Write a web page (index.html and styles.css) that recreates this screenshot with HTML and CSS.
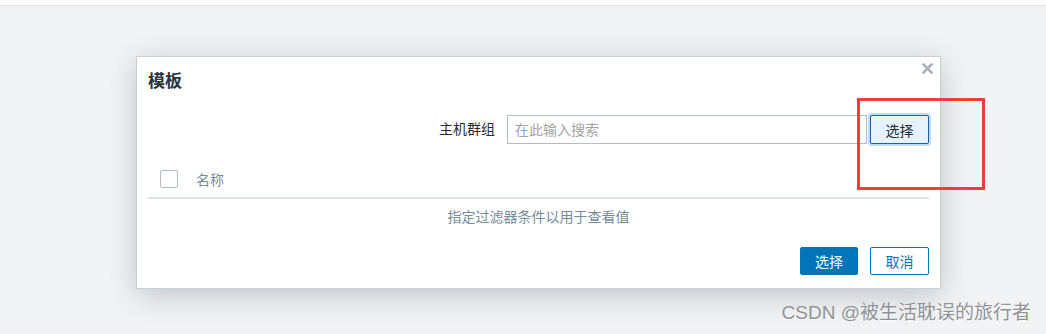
FILE: index.html
```html
<!DOCTYPE html>
<html lang="zh-CN">
<head>
    <meta charset="UTF-8">
    <meta name="viewport" content="width=device-width, initial-scale=1.0">
    <title>模板</title>
    <link rel="stylesheet" href="styles.css">
</head>
<body>

    <div class="topbar"></div>

    <div class="stage">

        <div class="overlay-dialog">
            <div class="dialog-header">
                <h4>模板</h4>
                <button class="btn-close" title="关闭">
                    <svg width="11" height="11" viewBox="0 0 11 11">
                        <path d="M1.5 1.5 L9.5 9.5 M9.5 1.5 L1.5 9.5" stroke="currentColor" stroke-width="2.6" stroke-linecap="square"/>
                    </svg>
                </button>
            </div>

            <div class="dialog-body">
                <div class="filter-row">
                    <label class="filter-label">主机群组</label>
                    <input class="filter-input" type="text" placeholder="在此输入搜索">
                    <button class="btn-grey">选择</button>
                </div>

                <table class="list-table">
                    <thead>
                        <tr>
                            <th class="cell-check"><span class="checkbox"></span></th>
                            <th>名称</th>
                        </tr>
                    </thead>
                    <tbody>
                        <tr class="nothing-to-show">
                            <td colspan="2">指定过滤器条件以用于查看值</td>
                        </tr>
                    </tbody>
                </table>
            </div>

            <div class="dialog-footer">
                <button class="btn-primary">选择</button>
                <button class="btn-alt">取消</button>
            </div>
        </div>

    </div>

    <!-- annotation drawn over the screenshot -->
    <div class="mark-box"></div>

    <div class="watermark">CSDN @被生活耽误的旅行者</div>

</body>
</html>
```

FILE: styles.css
```css
*,*::before,*::after {
    box-sizing: border-box;
    margin: 0;
    padding: 0;
}

body {
    width: 1046px;
    height: 334px;
    overflow: hidden;
    position: relative;
    background-color: #f2f3f4;
    color: #1f2c33;
    font-family: "Liberation Sans", "Noto Sans CJK SC", sans-serif;
    font-size: 14px;
}

.topbar {
    height: 6px;
    background-color: #ffffff;
    border-bottom: 1px solid #e6e8ea;
}

.stage {
    padding: 50px 0 0 136px;
}

/* dialog */
.overlay-dialog {
    position: relative;
    width: 805px;
    background-color: #ffffff;
    border: 1px solid #c9d0d5;
    box-shadow: 0 6px 28px rgba(60, 80, 95, 0.28);
    padding: 0 11px;
}

.dialog-header {
    padding-top: 15px;
    height: 34px;
}

.dialog-header h4 {
    font-size: 17px;
    line-height: 20px;
    font-weight: bold;
    color: #26343c;
}

.btn-close {
    position: absolute;
    top: 6px;
    right: 7px;
    width: 11px;
    height: 11px;
    border: none;
    background: none;
    color: #aab2b8;
    display: flex;
    cursor: pointer;
}

.dialog-body {
    padding-top: 24px;
}

.filter-row {
    display: flex;
    justify-content: flex-end;
    align-items: center;
    height: 29px;
}

.filter-label {
    margin-right: 12px;
    line-height: 29px;
}

.filter-input {
    width: 360px;
    height: 29px;
    border: 1px solid #b1bcc3;
    padding: 0 7px;
    font-family: inherit;
    font-size: 14px;
    color: #1f2c33;
    outline: none;
}

.filter-input::placeholder {
    color: #a2a2a2;
}

.btn-grey {
    margin-left: 3px;
    width: 59px;
    height: 29px;
    border: 1px solid #1d63a3;
    border-radius: 2px;
    background-color: #e6f2fd;
    box-shadow: 0 0 0 2px #bcdcf7;
    font-family: inherit;
    font-size: 14px;
    color: #1f2c33;
    cursor: pointer;
}

.list-table {
    width: 100%;
    margin-top: 17px;
    border-collapse: collapse;
}

.list-table th {
    height: 37px;
    text-align: left;
    font-weight: normal;
    color: #768d99;
    border-bottom: 2px solid #dde2e5;
    vertical-align: middle;
}

.cell-check {
    width: 48px;
    padding-left: 12px;
}

.checkbox {
    display: block;
    width: 18px;
    height: 18px;
    border: 1px solid #acbbc4;
    border-radius: 2px;
    background-color: #ffffff;
}

.nothing-to-show td {
    height: 34px;
    text-align: center;
    color: #768d99;
}

.dialog-footer {
    display: flex;
    justify-content: flex-end;
    gap: 12px;
    padding: 15px 0 13px;
}

.btn-primary,
.btn-alt {
    height: 28px;
    border-radius: 2px;
    font-family: inherit;
    font-size: 14px;
    cursor: pointer;
}

.btn-primary {
    width: 58px;
    border: 1px solid #0275b8;
    background-color: #0275b8;
    color: #ffffff;
}

.btn-alt {
    width: 59px;
    border: 1px solid #0275b8;
    background-color: #ffffff;
    color: #0275b8;
}

/* red annotation box */
.mark-box {
    position: absolute;
    left: 857px;
    top: 98px;
    width: 128px;
    height: 92px;
    border: 3px solid #f23b3b;
}

.watermark {
    position: absolute;
    right: 15px;
    top: 302px;
    font-size: 19px;
    line-height: 22px;
    color: #8f9397;
    text-shadow: 0 1px 1px rgba(255, 255, 255, 0.8);
}
```
